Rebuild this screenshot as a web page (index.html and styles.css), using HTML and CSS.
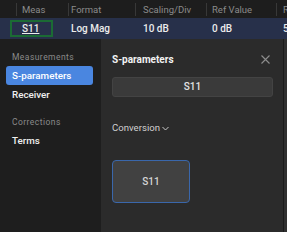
FILE: index.html
```html
<!DOCTYPE html>
<html>
<head>
<meta charset="utf-8">
<link rel="stylesheet" href="styles.css">
</head>
<body>
<div class="app">
  <div class="grid head">
    <div class="c c0"></div>
    <div class="c c1">Meas</div>
    <div class="c c2">Format</div>
    <div class="c c3">Scaling/Div</div>
    <div class="c c4">Ref Value</div>
    <div class="c c5">R</div>
  </div>
  <div class="grid row">
    <div class="c c0"></div>
    <div class="c c1"><span class="focus"><u>S11</u></span></div>
    <div class="c c2">Log Mag</div>
    <div class="c c3">10 dB</div>
    <div class="c c4">0 dB</div>
    <div class="c c5">5</div>
  </div>
  <div class="main">
    <nav class="side">
      <div class="label">Measurements</div>
      <div class="item active">S-parameters</div>
      <div class="item">Receiver</div>
      <div class="label gap">Corrections</div>
      <div class="item">Terms</div>
    </nav>
    <section class="panel">
      <div class="title-row">
        <div class="title">S-parameters</div>
        <svg class="close" width="9" height="9" viewBox="0 0 9 9"><path d="M0.5 0.5 L8.5 8.5 M8.5 0.5 L0.5 8.5" stroke="#8e8e8e" stroke-width="1.1" fill="none"/></svg>
      </div>
      <div class="field">S11</div>
      <div class="conv">Conversion <svg width="7" height="5" viewBox="0 0 7 5"><path d="M0.5 1 L3.5 4 L6.5 1" stroke="#c8c8c8" stroke-width="1" fill="none"/></svg></div>
      <div class="tile">S11</div>
    </section>
    <div class="edge"></div>
  </div>
</div>
</body>
</html>
```

FILE: styles.css
```css
* { box-sizing: border-box; }
html, body { margin: 0; padding: 0; }
body {
  width: 287px;
  height: 232px;
  overflow: hidden;
  background: #1e1e1e;
  font-family: "Roboto", "Liberation Sans", sans-serif;
}
.app { display: flex; flex-direction: column; height: 232px; }
.grid {
  display: grid;
  grid-template-columns: 16px 52px 67px 71px 70px 11px;
  white-space: nowrap;
  overflow: hidden;
}
.head {
  height: 18px;
  background: #1d1d1d;
  color: #8b8b8b;
  font-size: 9.5px;
  align-items: center;
}
.head .c {
  height: 13px;
  line-height: 13px;
  border-left: 1px solid #383838;
}
.head .c0 { border-left: none; }
.row {
  height: 21px;
  background: #27304a;
  color: #ececec;
  font-size: 10px;
  font-weight: 500;
  align-items: center;
}
.c1 { padding-left: 5px; }
.c2 { padding-left: 2px; }
.c3 { padding-left: 7px; }
.c4 { padding-left: 5px; }
.c5 { padding-left: 6px; }
.row .c1 { padding-left: 6px; }
.row .c2 { padding-left: 3px; }
.row .c3 { padding-left: 8px; }
.row .c4 { padding-left: 6px; }
.row .c5 { padding-left: 7px; }
.focus {
  display: block;
  margin-left: -12px;
  width: 43px;
  height: 17px;
  line-height: 13px;
  border: 2px solid #1b6b34;
  padding-left: 10px;
}
.focus u { text-decoration-thickness: 1px; text-underline-offset: 1px; }
.main { flex: 1; display: flex; }
.side {
  width: 101px;
  background: #1e1e1e;
  padding: 12px 8px 0 6px;
}
.label {
  height: 12px;
  line-height: 12px;
  font-size: 8.5px;
  letter-spacing: 0.45px;
  color: #8a8a8a;
  padding-left: 6px;
  margin-bottom: 3px;
}
.label.gap { margin-top: 12px; }
.item {
  height: 19px;
  line-height: 19px;
  font-size: 9.8px;
  font-weight: 500;
  color: #f0f0f0;
  padding-left: 6px;
  border-radius: 3px;
}
.item.active { background: #4a86e0; color: #fff; }
.panel {
  flex: 1;
  background: #2b2b2b;
  padding: 12px 10px 0 11px;
}
.title-row {
  height: 16px;
  display: flex;
  align-items: center;
  justify-content: space-between;
}
.title { font-size: 10px; font-weight: 700; color: #f2f2f2; }
.close { margin-right: 3px; }
.field {
  margin-top: 10px;
  height: 20px;
  line-height: 18px;
  background: #3a3a3a;
  border: 1px solid #434343;
  border-radius: 3px;
  text-align: center;
  font-size: 10px;
  font-weight: 500;
  color: #e4e4e4;
}
.conv {
  margin-top: 25px;
  height: 12px;
  line-height: 12px;
  font-size: 9.6px;
  color: #d0d0d0;
  display: flex;
  align-items: center;
  gap: 2px;
}
.tile {
  margin-top: 26px;
  width: 78px;
  height: 43px;
  line-height: 41px;
  background: #414141;
  border: 1px solid #3a67ab;
  border-radius: 4px;
  text-align: center;
  font-size: 10px;
  font-weight: 500;
  color: #d6d6d6;
}
.edge {
  width: 4px;
  background: #303030;
  border-left: 1px solid #1b1b1b;
}
```
